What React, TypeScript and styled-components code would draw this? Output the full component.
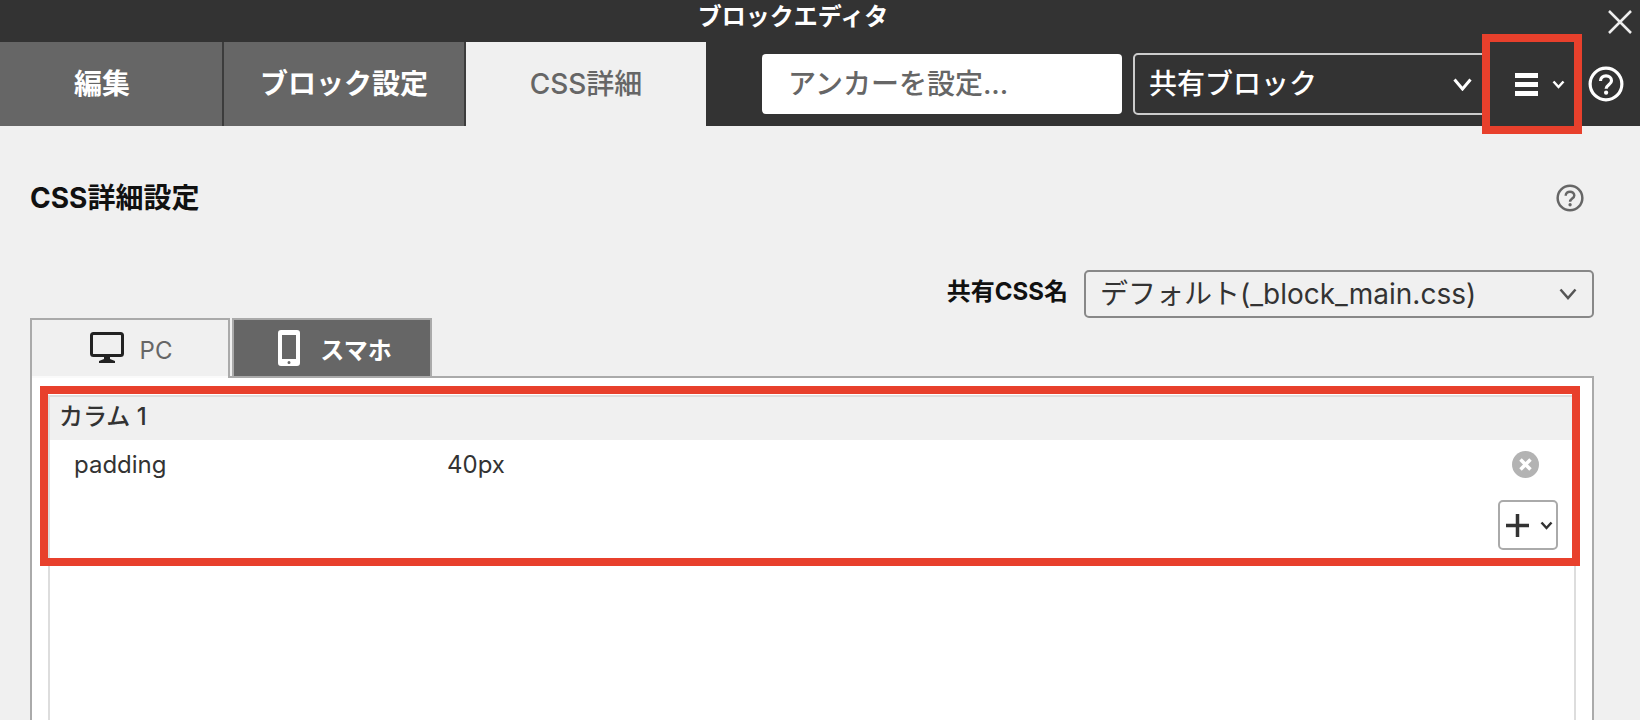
import React from "react";
import styled, { createGlobalStyle } from "styled-components";

const GlobalStyle = createGlobalStyle`
  *, *::before, *::after { box-sizing: border-box; }
  html, body { margin: 0; padding: 0; }
  body { background: #f0f0f0; }
  body, button, input, select {
    font-family: Inter, "Noto Sans CJK JP", sans-serif;
  }
  button {
    margin: 0;
    padding: 0;
    border: 0;
    background: none;
    cursor: pointer;
  }
  svg { display: block; flex: none; }
`;

const Page = styled.div`
  display: flex;
  flex-direction: column;
  min-height: 100vh;
  color: #333;
`;

const Header = styled.header`
  background: #333;
  color: #fff;
`;

const TitleBar = styled.div`
  display: flex;
  height: 42px;
`;

const Title = styled.h1`
  flex: 1;
  margin: 0;
  font-size: 24px;
  line-height: 34px;
  font-weight: 700;
  text-align: center;
`;

const CloseButton = styled.button`
  display: flex;
  justify-content: flex-end;
  align-items: center;
  width: 54px;
  padding: 2px 8px 0 0;
`;

const Toolbar = styled.div`
  display: flex;
  height: 84px;
`;

const MainTabs = styled.div`
  display: flex;
`;

const MainTab = styled.button<{ $selected?: boolean; $width: number }>`
  width: ${(p) => p.$width}px;
  border-right: ${(p) => (p.$selected ? "0" : "2px solid #3c3c3c")};
  background: ${(p) => (p.$selected ? "#f0f0f0" : "#666")};
  color: ${(p) => (p.$selected ? "#666" : "#fff")};
  font-size: 28px;
  line-height: 40px;
  font-weight: ${(p) => (p.$selected ? 500 : 700)};
  &:first-child { padding-right: 18px; }
`;

const Tools = styled.div`
  display: flex;
  flex: 1;
  align-items: center;
  padding: 0 16px 0 56px;
`;

const AnchorInput = styled.input`
  flex: 1 1 360px;
  min-width: 0;
  height: 60px;
  margin-right: 11px;
  padding: 0 26px;
  border: 0;
  border-radius: 4px;
  background: #fff;
  color: #333;
  font-size: 28px;
  font-weight: 500;
  &::placeholder { color: #666; opacity: 1; }
`;

const SelectFrame = styled.div<{ $dark?: boolean }>`
  display: grid;
  align-items: center;
  flex: ${(p) => (p.$dark ? "1 1 356px" : "0 1 510px")};
  min-width: 0;
  color: ${(p) => (p.$dark ? "#fff" : "#555")};
  > * { grid-area: 1 / 1; }
  > svg {
    justify-self: end;
    margin-right: 17px;
    pointer-events: none;
  }
`;

const Select = styled.select<{ $dark?: boolean }>`
  appearance: none;
  width: 100%;
  height: ${(p) => (p.$dark ? 62 : 48)}px;
  padding: 0 48px 0 14px;
  border: 2px solid ${(p) => (p.$dark ? "#ccc" : "#888")};
  border-radius: 5px;
  background: transparent;
  color: ${(p) => (p.$dark ? "#fff" : "#333")};
  font-size: 28px;
  font-weight: ${(p) => (p.$dark ? 500 : 400)};
`;

const MenuButton = styled.button`
  position: relative;
  display: flex;
  align-items: center;
  gap: 14px;
  height: 84px;
  padding: 0 23px 0 26px;
  color: #fff;
`;

const Highlight = styled.span<{ $inset: string }>`
  position: absolute;
  inset: ${(p) => p.$inset};
  border: 8px solid #e8402c;
  pointer-events: none;
  z-index: 1;
`;

const IconButton = styled.button`
  display: flex;
  color: inherit;
`;

const Content = styled.main`
  display: flex;
  flex-direction: column;
  flex: 1;
  padding: 52px 46px 0 30px;
`;

const HeadingRow = styled.div`
  display: flex;
  align-items: center;
  justify-content: space-between;
  height: 40px;
  padding-right: 10px;
  color: #666;
`;

const Heading = styled.h2`
  margin: 0;
  color: #111;
  font-size: 28px;
  line-height: 40px;
  font-weight: 700;
`;

const SharedRow = styled.div`
  display: flex;
  align-items: center;
  justify-content: flex-end;
  gap: 16px;
  margin-top: 52px;
`;

const SharedLabel = styled.label`
  padding-bottom: 4px;
  color: #111;
  font-size: 24px;
  line-height: 32px;
  font-weight: 700;
  white-space: nowrap;
`;

const DeviceTabs = styled.div`
  display: flex;
  gap: 2px;
`;

const DeviceTab = styled.button<{ $selected?: boolean }>`
  position: relative;
  display: flex;
  align-items: center;
  justify-content: center;
  gap: ${(p) => (p.$selected ? 16 : 20)}px;
  width: 200px;
  height: 58px;
  padding-left: ${(p) => (p.$selected ? 2 : 6)}px;
  border: 2px solid #aaa;
  border-bottom: 0;
  background: ${(p) => (p.$selected ? "#f0f0f0" : "#666")};
  color: ${(p) => (p.$selected ? "#666" : "#fff")};
  font-size: 24px;
  line-height: 32px;
  font-weight: ${(p) => (p.$selected ? 400 : 700)};
  /* The open tab covers the panel's top line below it. */
  &::after {
    content: "";
    display: ${(p) => (p.$selected ? "block" : "none")};
    position: absolute;
    left: 0;
    right: 0;
    top: 100%;
    height: 2px;
    background: #fafafa;
  }
`;

const DeviceName = styled.span`
  padding-top: 6px;
`;

const Panel = styled.section`
  display: flex;
  flex: 1;
  padding: 17px 16px 0;
  border: 2px solid #aaa;
  border-bottom: 0;
  background: #fff;
`;

const List = styled.div`
  flex: 1;
  border: 2px solid #ddd;
  border-bottom: 0;
`;

const Group = styled.section`
  position: relative;
`;

const GroupTitle = styled.h3`
  margin: 0;
  padding: 0 9px 3px;
  background: #f0f0f0;
  color: #333;
  font-size: 24px;
  line-height: 40px;
  font-weight: 500;
`;

const PropertyTable = styled.table`
  width: 100%;
  border-collapse: collapse;
  table-layout: fixed;
  font-size: 24px;
  line-height: 32px;
`;

const NameCell = styled.th`
  width: 397px;
  height: 50px;
  padding: 0 0 0 24px;
  font-weight: 400;
  text-align: left;
`;

const ValueCell = styled.td`
  padding: 0;
`;

const ActionCell = styled.td`
  width: 62px;
  padding: 0 0 2px;
`;

const AddRow = styled.div`
  display: flex;
  justify-content: flex-end;
  padding: 10px 16px 6px;
`;

const AddButton = styled.button`
  display: flex;
  align-items: center;
  justify-content: center;
  gap: 11px;
  width: 60px;
  height: 50px;
  padding-left: 2px;
  border: 2px solid #aaa;
  border-radius: 5px;
  color: #333;
`;

function Chevron({ width, height, stroke }: { width: number; height: number; stroke: number }) {
  return (
    <svg width={width} height={height} fill="none" stroke="currentColor" strokeWidth={stroke} aria-hidden="true">
      <path d={`M1.5 1.5L${width / 2} ${height - 2}L${width - 1.5} 1.5`} />
    </svg>
  );
}

function HelpIcon({ size, stroke }: { size: number; stroke: number }) {
  return (
    <svg width={size} height={size} viewBox="0 0 34 34" fill="none" stroke="currentColor" strokeWidth={stroke} aria-hidden="true">
      <circle cx="17" cy="17" r="15" />
      <path d="M11.8 14.2c0-3 2.3-4.9 5.2-4.9s5.2 1.9 5.2 4.6c0 3.7-5.1 3.9-5.1 7.7" />
      <circle cx="17.1" cy="25.2" r="2" fill="currentColor" stroke="none" />
    </svg>
  );
}

export default function App() {
  return (
    <Page>
      <GlobalStyle />
      <Header>
        <TitleBar>
          <Title>ブロックエディタ</Title>
          <CloseButton aria-label="閉じる">
            <svg width="24" height="24" fill="none" stroke="#eee" strokeWidth="2.5" aria-hidden="true">
              <path d="M1 1l22 22M23 1L1 23" />
            </svg>
          </CloseButton>
        </TitleBar>
        <Toolbar>
          <MainTabs role="tablist">
            <MainTab role="tab" $width={224}>編集</MainTab>
            <MainTab role="tab" $width={242}>ブロック設定</MainTab>
            <MainTab role="tab" aria-selected="true" $selected $width={240}>CSS詳細</MainTab>
          </MainTabs>
          <Tools>
            <AnchorInput type="text" aria-label="アンカー" placeholder="アンカーを設定..." />
            <SelectFrame $dark>
              <Select $dark aria-label="ブロックの種類">
                <option>共有ブロック</option>
              </Select>
              <Chevron width={19} height={13} stroke={3} />
            </SelectFrame>
            <MenuButton aria-label="メニュー">
              <svg width="23" height="23" fill="currentColor" aria-hidden="true">
                <path d="M0 0h23v5H0zM0 9h23v5H0zM0 18h23v5H0z" />
              </svg>
              <Chevron width={13} height={9} stroke={2.5} />
              <Highlight $inset="-8px 6px -8px -7px" />
            </MenuButton>
            <IconButton aria-label="ヘルプ">
              <HelpIcon size={36} stroke={3} />
            </IconButton>
          </Tools>
        </Toolbar>
      </Header>

      <Content>
        <HeadingRow>
          <Heading>CSS詳細設定</Heading>
          <IconButton aria-label="CSS詳細設定のヘルプ">
            <HelpIcon size={28} stroke={3} />
          </IconButton>
        </HeadingRow>
        <SharedRow>
          <SharedLabel htmlFor="shared-css">共有CSS名</SharedLabel>
          <SelectFrame>
            <Select id="shared-css">
              <option>デフォルト(_block_main.css)</option>
            </Select>
            <Chevron width={18} height={12} stroke={2.5} />
          </SelectFrame>
        </SharedRow>
        <DeviceTabs role="tablist">
          <DeviceTab role="tab" aria-selected="true" $selected>
            <svg width="34" height="32" aria-hidden="true">
              <rect x="1.5" y="1.5" width="31" height="22" rx="2" fill="none" stroke="#222" strokeWidth="3" />
              <path d="M14 24h6v3l5 2v2H9v-2l5-2z" fill="#222" />
            </svg>
            <DeviceName>PC</DeviceName>
          </DeviceTab>
          <DeviceTab role="tab">
            <svg width="22" height="36" aria-hidden="true">
              <path
                d="M3 0h16a3 3 0 0 1 3 3v30a3 3 0 0 1-3 3H3a3 3 0 0 1-3-3V3a3 3 0 0 1 3-3zM4 5v24h14V5zM11 31a1.5 1.5 0 1 0 0 3a1.5 1.5 0 0 0 0-3z"
                fill="#fff"
                fillRule="evenodd"
              />
            </svg>
            <DeviceName>スマホ</DeviceName>
          </DeviceTab>
        </DeviceTabs>
        <Panel>
          <List>
            <Group>
              <GroupTitle>カラム 1</GroupTitle>
              <PropertyTable>
                <tbody>
                  <tr>
                    <NameCell scope="row">padding</NameCell>
                    <ValueCell>40px</ValueCell>
                    <ActionCell>
                      <IconButton aria-label="削除">
                        <svg width="27" height="27" aria-hidden="true">
                          <circle cx="13.5" cy="13.5" r="13.5" fill="#b3b3b3" />
                          <path d="M8.5 8.5l10 10M18.5 8.5l-10 10" stroke="#fff" strokeWidth="3.5" />
                        </svg>
                      </IconButton>
                    </ActionCell>
                  </tr>
                </tbody>
              </PropertyTable>
              <AddRow>
                <AddButton aria-label="追加">
                  <svg width="23" height="23" stroke="currentColor" strokeWidth="3.5" aria-hidden="true">
                    <path d="M11.5 0v23M0 11.5h23" />
                  </svg>
                  <Chevron width={13} height={9} stroke={2.5} />
                </AddButton>
              </AddRow>
              <Highlight $inset="-11px -6px -10px -10px" />
            </Group>
          </List>
        </Panel>
      </Content>
    </Page>
  );
}
